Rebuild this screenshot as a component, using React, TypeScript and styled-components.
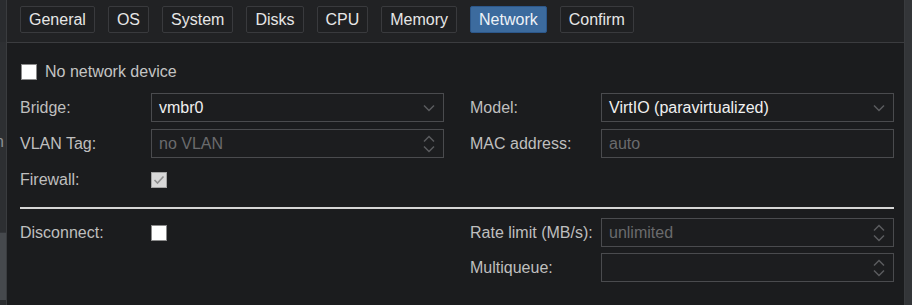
import styled, { createGlobalStyle } from "styled-components";
import React from "react";

const GlobalStyle = createGlobalStyle`
  html, body {
    margin: 0;
    padding: 0;
    background: #2b2d30;
  }
  body {
    font-family: "Liberation Sans", Arial, sans-serif;
    font-size: 16px;
  }
`;

const tabs = ["General", "OS", "System", "Disks", "CPU", "Memory", "Network", "Confirm"];

function ChevronDown() {
  return (
    <svg width="12" height="8" viewBox="0 0 12 8">
      <path d="M1 1.5 L6 6.5 L11 1.5" fill="none" stroke="#5a5b5e" strokeWidth="1.5" />
    </svg>
  );
}

function Spinner() {
  return (
    <svg width="12" height="20" viewBox="0 0 12 20">
      <path d="M1 7.5 L6 2.5 L11 7.5" fill="none" stroke="#5a5b5e" strokeWidth="1.5" />
      <path d="M1 12.5 L6 17.5 L11 12.5" fill="none" stroke="#5a5b5e" strokeWidth="1.5" />
    </svg>
  );
}

type FieldProps = {
  value?: string;
  placeholder?: string;
  trigger?: "combo" | "spin";
};

function Field({ value, placeholder, trigger }: FieldProps) {
  return (
    <FieldBox>
      <FieldText $muted={!value}>{value || placeholder}</FieldText>
      {trigger && <Trigger>{trigger === "combo" ? <ChevronDown /> : <Spinner />}</Trigger>}
    </FieldBox>
  );
}

function Check({ checked, disabled }: { checked?: boolean; disabled?: boolean }) {
  return (
    <CheckBox $disabled={disabled}>
      {checked && (
        <svg width="14" height="14" viewBox="0 0 14 14">
          <path d="M2.5 7 L5.5 10 L11.5 3.5" fill="none" stroke="#8f8f8f" strokeWidth="1.6" />
        </svg>
      )}
    </CheckBox>
  );
}

export default function App() {
  return (
    <>
      <GlobalStyle />
      <Shell>
        <SideStrip>
          <StripTop />
          <StripMid>
            <Ghost>n</Ghost>
          </StripMid>
          <StripLight />
          <StripBottom />
        </SideStrip>
        <Window>
          <TabBar>
            {tabs.map((t) => (
              <Tab key={t} $active={t === "Network"}>
                {t}
              </Tab>
            ))}
          </TabBar>
          <Body>
            <TopRow>
              <Check />
              <CheckLabel>No network device</CheckLabel>
            </TopRow>
            <Columns>
              <Column $gap={7}>
                <FieldRow>
                  <Label>Bridge:</Label>
                  <Field value="vmbr0" trigger="combo" />
                </FieldRow>
                <FieldRow>
                  <Label>VLAN Tag:</Label>
                  <Field placeholder="no VLAN" trigger="spin" />
                </FieldRow>
                <FieldRow>
                  <Label>Firewall:</Label>
                  <Check checked disabled />
                </FieldRow>
              </Column>
              <Column $gap={7}>
                <FieldRow>
                  <Label>Model:</Label>
                  <Field value="VirtIO (paravirtualized)" trigger="combo" />
                </FieldRow>
                <FieldRow>
                  <Label>MAC address:</Label>
                  <Field placeholder="auto" />
                </FieldRow>
              </Column>
            </Columns>
            <Separator />
            <Columns>
              <Column $gap={6}>
                <FieldRow>
                  <Label>Disconnect:</Label>
                  <Check />
                </FieldRow>
              </Column>
              <Column $gap={6}>
                <FieldRow>
                  <Label>Rate limit (MB/s):</Label>
                  <Field placeholder="unlimited" trigger="spin" />
                </FieldRow>
                <FieldRow>
                  <Label>Multiqueue:</Label>
                  <Field trigger="spin" />
                </FieldRow>
              </Column>
            </Columns>
          </Body>
        </Window>
        <RightStrip />
      </Shell>
    </>
  );
}

const Shell = styled.div`
  display: flex;
  width: 912px;
  height: 305px;
  overflow: hidden;
`;

const SideStrip = styled.div`
  width: 6px;
  display: flex;
  flex-direction: column;
  overflow: hidden;
`;

const StripTop = styled.div`
  height: 42px;
  background: #2a2c2f;
`;

const StripMid = styled.div`
  height: 191px;
  background: #2d2f32;
  border-bottom: 1px solid #34363a;
  padding-top: 90px;
  box-sizing: border-box;
`;

const Ghost = styled.div`
  color: #8e9094;
  font-size: 16px;
  line-height: 20px;
  margin-left: -5px;
  white-space: nowrap;
`;

const StripLight = styled.div`
  height: 67px;
  background: #46494d;
`;

const StripBottom = styled.div`
  flex: 1;
  background: #2b2d30;
`;

const Window = styled.div`
  width: 897px;
  border-left: 1px solid #3a3c3f;
  background: #1b1c1e;
  display: flex;
  flex-direction: column;
`;

const RightStrip = styled.div`
  flex: 1;
  background: #333538;
  border-left: 1px solid #393b3e;
`;

const TabBar = styled.div`
  height: 43px;
  box-sizing: border-box;
  background: #212224;
  border-bottom: 1px solid #3b3c3f;
  display: flex;
  align-items: flex-start;
  gap: 13px;
  padding: 6px 0 0 13px;
`;

const Tab = styled.div<{ $active?: boolean }>`
  height: 27px;
  box-sizing: border-box;
  display: flex;
  align-items: center;
  padding: 0 8px;
  border: 1px solid ${(p) => (p.$active ? "#2c578a" : "#393a3d")};
  border-radius: 2px;
  background: ${(p) => (p.$active ? "#3c6b9e" : "#1f2022")};
  color: ${(p) => (p.$active ? "#eef2f7" : "#e6e6e6")};
  font-size: 16px;
`;

const Body = styled.div`
  padding: 14px 10px 0 13px;
  display: flex;
  flex-direction: column;
`;

const TopRow = styled.div`
  height: 29px;
  display: flex;
  align-items: center;
  gap: 8px;
  padding-left: 1px;
  margin-bottom: 7px;
`;

const CheckLabel = styled.span`
  color: #c4c4c4;
  font-size: 16px;
`;

const Columns = styled.div`
  display: grid;
  grid-template-columns: 424px 424px;
  column-gap: 26px;
`;

const Column = styled.div<{ $gap: number }>`
  display: flex;
  flex-direction: column;
  gap: ${(p) => p.$gap}px;
`;

const FieldRow = styled.div`
  height: 29px;
  display: flex;
  align-items: center;
`;

const Label = styled.div`
  width: 131px;
  flex: none;
  color: #bfbfbf;
  font-size: 16px;
  white-space: nowrap;
`;

const FieldBox = styled.div`
  flex: 1;
  height: 29px;
  box-sizing: border-box;
  border: 1px solid #4a4b4e;
  background: #1c1d1f;
  display: flex;
  align-items: center;
  padding-left: 7px;
`;

const FieldText = styled.span<{ $muted?: boolean }>`
  flex: 1;
  color: ${(p) => (p.$muted ? "#6a6b6d" : "#f0f0f0")};
  font-size: 16px;
  white-space: nowrap;
`;

const Trigger = styled.div`
  width: 28px;
  height: 100%;
  display: flex;
  align-items: center;
  justify-content: center;
`;

const CheckBox = styled.div<{ $disabled?: boolean }>`
  width: 16px;
  height: 16px;
  box-sizing: border-box;
  flex: none;
  border: 1px solid ${(p) => (p.$disabled ? "#a3a3a3" : "#8a8a8a")};
  background: ${(p) => (p.$disabled ? "#d8d8d8" : "#ffffff")};
  display: flex;
  align-items: center;
  justify-content: center;
`;

const Separator = styled.div`
  height: 2px;
  background: #d6d6d6;
  margin: 13px 0 9px;
`;
